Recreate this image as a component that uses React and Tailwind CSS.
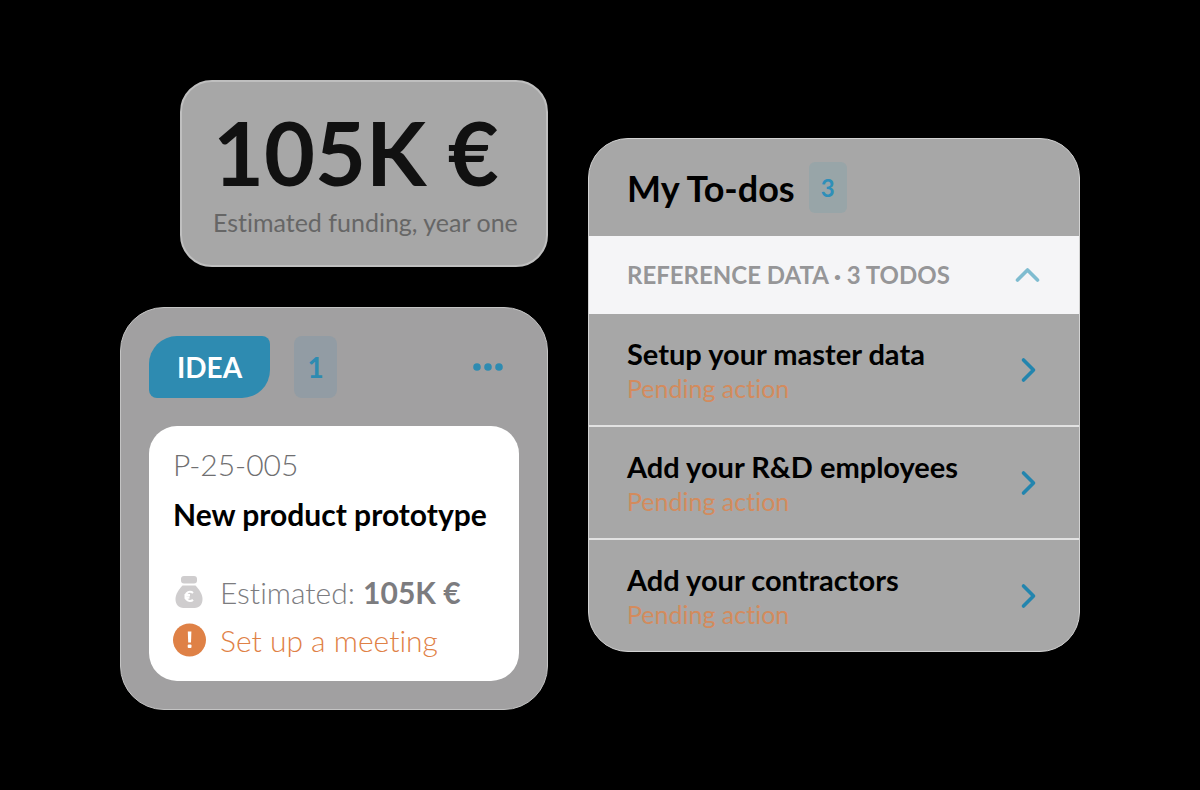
import { useState } from 'react'

const TODOS = [
  { id: 'master-data', title: 'Setup your master data', status: 'Pending action' },
  { id: 'employees', title: 'Add your R&D employees', status: 'Pending action' },
  { id: 'contractors', title: 'Add your contractors', status: 'Pending action' },
]

export default function App() {
  return (
    <main className="min-h-screen bg-black flex items-center justify-center p-6 font-['Lato','Open_Sans',sans-serif] [font-variant-ligatures:none]">
      <div className="w-full max-w-[960px] grid grid-cols-[428fr_492fr] items-center gap-10">
        <div className="flex flex-col items-end gap-10">
          <FundingCard />
          <IdeaColumn />
        </div>
        <TodoPanel todos={TODOS} />
      </div>
    </main>
  )
}

function FundingCard() {
  return (
    <section className="w-[86%] rounded-[32px] border-2 border-[#bfbfbf] bg-[#a7a7a7] px-[31px] pt-[26px] pb-[25px] whitespace-nowrap">
      <p className="text-[88px] leading-[88px] font-bold text-[#111111]">105K €</p>
      <p className="mt-2 text-[25px] leading-9 text-[#666666]">Estimated funding, year one</p>
    </section>
  )
}

function IdeaColumn() {
  return (
    <section className="w-full rounded-[44px] border border-[#c4c4c4] bg-[#a1a0a1] p-7">
      <header className="flex items-center">
        <h2 className="h-[62px] px-7 flex items-center rounded-tl-[28px] rounded-tr-lg rounded-br-[28px] rounded-bl-lg bg-[#2e8bb1] text-[28px] font-bold text-white">
          IDEA
        </h2>
        <span className="ml-6 h-[62px] w-[43px] flex items-center justify-center rounded-lg bg-[#929ca4] text-[28px] font-bold text-[#2e8bb1]">
          1
        </span>
        <button type="button" aria-label="More options" className="ml-auto mr-4">
          <svg width="30" height="8" viewBox="0 0 30 8" fill="#2e8bb1">
            <circle cx="4" cy="4" r="3.8" />
            <circle cx="15" cy="4" r="3.8" />
            <circle cx="26" cy="4" r="3.8" />
          </svg>
        </button>
      </header>

      <article className="mt-7 rounded-[28px] bg-white px-6 pt-[18px] pb-[17px] whitespace-nowrap">
        <p className="text-[30px] leading-10 font-light text-[#6f6f71]">P-25-005</p>
        <h3 className="mt-2 text-[30px] leading-[44px] font-bold text-black">
          New product prototype
        </h3>
        <div className="mt-8 flex items-center gap-[14px] h-12 text-[30px] text-[#7c7c7f]">
          <MoneyBagIcon />
          <p className="font-light">
            Estimated: <strong className="font-bold">105K €</strong>
          </p>
        </div>
        <div className="flex items-center gap-[14px] h-12 text-[30px] text-[#df8146]">
          <AlertIcon />
          <p className="font-light">Set up a meeting</p>
        </div>
      </article>
    </section>
  )
}

function TodoPanel({ todos }) {
  const [isOpen, setIsOpen] = useState(true)

  return (
    <section className="overflow-hidden rounded-[40px] border border-[#d2d2d2] bg-[#a7a7a7] whitespace-nowrap">
      <header className="h-[97px] px-[38px] flex items-center gap-[14px]">
        <h2 className="text-[36px] font-bold text-black">My To-dos</h2>
        <span className="h-[51px] w-[38px] flex items-center justify-center rounded-md bg-[#98a5a8] text-[24px] font-bold text-[#2e8fb9]">
          {todos.length}
        </span>
      </header>

      <button
        type="button"
        aria-expanded={isOpen}
        onClick={() => setIsOpen(!isOpen)}
        className="w-full h-[78px] px-[38px] flex items-center justify-between bg-[#f5f5f7] text-[24px] font-bold text-[#969698]"
      >
        <span>
          REFERENCE DATA <span className="align-[3px] text-xs">•</span> {todos.length} TODOS
        </span>
        <svg width="26" height="26" viewBox="0 0 26 26" fill="none" stroke="#7fbcd0" strokeWidth="3.6" strokeLinecap="round" strokeLinejoin="round">
          <path d="M2.500 18 12.500 8l10 10" />
        </svg>
      </button>

      {isOpen && (
        <ul className="divide-y-2 divide-[#e2e2e2]">
          {todos.map((todo) => (
            <li key={todo.id}>
              <button
                type="button"
                className="w-full px-[38px] pt-[22px] pb-[21px] flex items-center justify-between text-left"
              >
                <span>
                  <span className="block text-[29px] leading-9 font-bold text-black">
                    {todo.title}
                  </span>
                  <span className="block text-[25px] leading-8 text-[#d38b5d]">
                    {todo.status}
                  </span>
                </span>
                <svg width="26" height="26" viewBox="0 0 26 26" fill="none" stroke="#2385ae" strokeWidth="3.6" strokeLinecap="round" strokeLinejoin="round">
                  <path d="M8.500 3l10 10-10 10" />
                </svg>
              </button>
            </li>
          ))}
        </ul>
      )}
    </section>
  )
}

function MoneyBagIcon() {
  return (
    <svg width="33" height="34" viewBox="0 0 33 34" className="shrink-0">
      <rect x="8" y="1" width="16" height="7.500" rx="3" fill="#cfcdce" />
      <path d="M9.500 10.500h13c3 3.200 7 8 7 13.500 0 5.500-3 9-8 9h-11c-5 0-8-3.500-8-9 0-5.500 4-10.300 7-13.500z" fill="#cfcdce" />
      <path d="M20 18a4.500 4.500 0 1 0 0 6.800M11.500 20.200h5.500M11.500 22.600h5" fill="none" stroke="#fff" strokeWidth="2.200" />
    </svg>
  )
}

function AlertIcon() {
  return (
    <svg width="33" height="34" viewBox="0 0 33 34" className="shrink-0">
      <circle cx="16.500" cy="17" r="16.500" fill="#df8146" />
      <path d="M14.800 8.500h3.600l-.4 11h-2.800z" fill="#fff" />
      <rect x="14.700" y="21.500" width="3.800" height="3.600" rx="1" fill="#fff" />
    </svg>
  )
}
